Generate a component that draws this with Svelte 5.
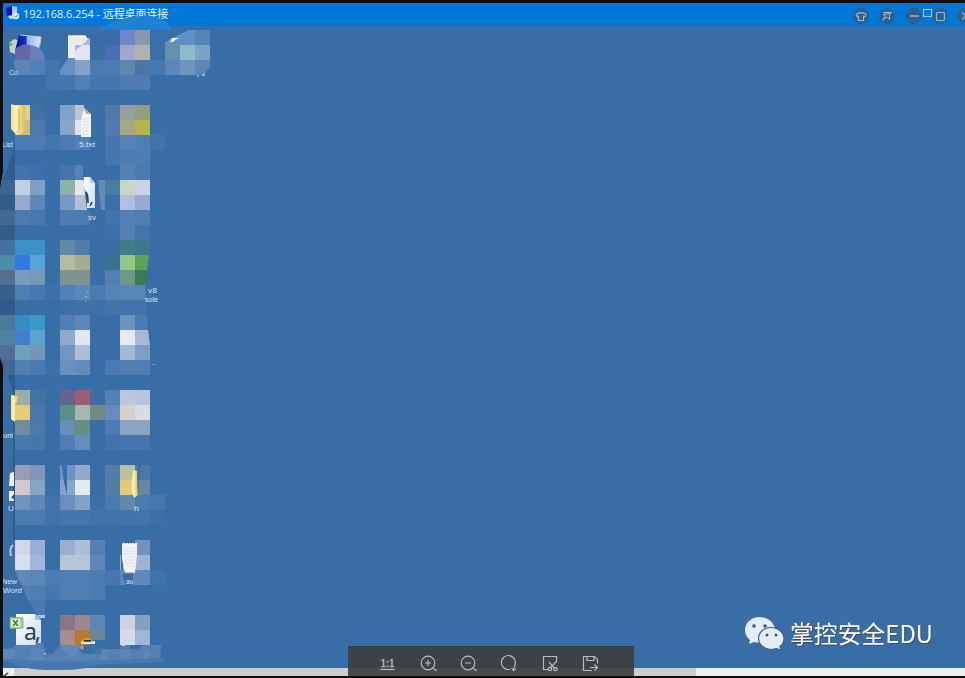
<script>
  const cell = 15;
  // Each row: top edge, then pairs of column index and fill
  const rows = [
    [30, '7:3a6cab 8:7186c8 9:8799b0 10:386ea9 12:6695cd 13:5584bb'],
    [45, '7:4670b3 8:a1a6cd 9:b3b0b0 10:386ea9 11:668fa8 12:8fbccb 13:7ba3c6'],
    [60, '3:4174ad 5:84a1c6 6:4b7ab1 7:4c7cb2 8:5f86ab 9:4a76a2 10:4678b0 11:5a87b8 12:6e95be'],
    [75, '3:4075ad 4:4477ae 5:5080b4 6:4577ae 7:4577ae 8:4f7db2 9:4f7db2'],
    [105, '2:4072a6 4:82a2c8 7:5079a8 8:999ea0 9:929f7c'],
    [120, '1:cfc070 2:4b79af 4:8ba5c9 7:527ab2 8:a5aa7e 9:b4b64a'],
    [135, '1:4b7cb3 2:4b7cb3 3:4276ae 4:4b7bb2 5:5280b5 7:4577ad 8:5682b6 9:4f7eb3 10:4174aa'],
    [150, '7:4576ae 8:4d7db1 9:4d7db1'],
    [165, '1:4472ab 2:3f70aa 4:4574ad 8:5681b5 9:4b7ab1'],
    [180, '0:3d6593 1:c0d1e5 2:7f9fc4 4:8eb3a4 7:487e9e 8:c6d7c4 9:cdd3e6'],
    [195, '0:325c8a 1:98abc8 2:6088b7 4:7898c5 7:3a6ea8 8:b0c1df 9:95abd2'],
    [210, '0:426990 1:4b7bae 2:4777ae 4:4d7db1 5:4b7bb0 7:4174aa 8:5381b5 9:4f7eb3'],
    [225, '0:325c8a 7:3d70a9 8:5480b4 9:4374ac'],
    [240, '0:43739b 1:3b90c8 2:3994c3 4:6089a8 5:4f7caa 7:3a6ca3 8:3e7c88 9:3c7890'],
    [255, '0:4e8aab 1:3179dd 2:54a5d5 4:b7bb9e 5:a7ab90 7:3a7192 8:92c886 9:5aa357'],
    [270, '0:556e92 1:7a9bbb 2:7898b7 4:7f9490 5:7f9490 7:537fb3 8:6b9989 9:3a7a5a'],
    [285, '0:355f8e 1:4d7fb5 2:4779b0 3:3d70a8 4:5480b5 5:5c87b8 6:4b7ab0 7:5782b3 8:5985b7 9:5985b7'],
    [300, '0:305a88 4:3e70a8 5:4072a9 6:3e70a8 7:4273aa 8:4273aa 9:4273aa'],
    [315, '0:497a9e 1:368bc7 2:389ac8 4:517eb4 5:6086b6 8:6d94bd 9:4a7aae'],
    [330, '0:4f829f 1:427fd0 2:5ba2cc 4:8eaacd 5:e3e7f0 8:e8eaf0 9:a7b9d5'],
    [345, '0:516e94 1:6fa0bd 2:7396b5 4:7396be 5:afbed8 8:a4b7d4 9:7f9ec6'],
    [360, '0:446791 1:527fb3 2:4b7ab0 3:3d70a8 4:6890bc 5:648bb9 7:4b7ab0 8:527fb3 9:517eb2'],
    [390, '1:9dada1 2:4372a5 4:62668f 5:985f70 6:3e6ba2 7:5580b3 8:bdc8dc 9:b3c5dc'],
    [405, '1:e4cd76 2:4977a9 4:579183 5:a6b6b0 6:718987 7:678cbb 8:d8ceca 9:d8dbe0'],
    [420, '1:718d9a 2:4b79aa 4:668fb7 5:62927f 7:4c7bb1 8:8aa5c2 9:8aa5c2'],
    [435, '1:4778af 2:4576ae 4:4f7fb2 5:658eba 7:4073aa 8:4577ad 9:4577ad'],
    [465, '1:979db9 2:8196ba 4:6d93bf 5:93a9cb 7:527da5 8:bcc09d 9:4c7aa6'],
    [480, '1:d5c7d0 2:87a3c2 4:86a4c7 5:e5e9f0 7:527da5 8:e4ca76 9:658aa0'],
    [495, '1:6f95bf 2:5d88b7 3:4073ab 4:688fbe 5:83a2c8 6:3e70a8 7:4b7ab0 8:6089ad 9:4b7bac 10:4677ad'],
    [510, '1:4b7cb0 2:4b7bb0 3:4073aa 4:4577ad 5:4577ad 6:4073aa 7:4073aa 8:4274ab 9:4375ab 10:3e70a8'],
    [540, '1:d0d8e9 2:99b0d4 4:97afd0 5:abc0d7 6:5781b4 9:7194be'],
    [555, '1:d7dff0 2:9fb7dc 4:b5c6d9 5:b5c6d9 6:6186b7 8:9eb2d0 9:a0b5d3'],
    [570, '2:5b86b8 3:4b7bb0 4:4f7eb3 5:4f7eb3 6:4b7bb0 7:4577ad 8:6088ba 9:6088ba 10:4073aa'],
    [585, '2:4f7eb3 3:4577ae 4:4f7eb3 5:4f7eb3 6:4b7bb0'],
    [615, '4:877782 5:9c8890 6:5c86b6 8:cdd5e4 9:82a1c2'],
    [630, '4:a98d8d 5:b57b34 8:d2daeb 9:a1b5d7']
  ];
  const mosaic = rows.flatMap(([y, spec]) =>
    spec.split(' ').map((pair) => {
      const [col, fill] = pair.split(':');
      return { x: Number(col) * cell, y, fill: '#' + fill };
    })
  );
  const labels = [
    [9, 75, 'Co', 9], [2, 147, 'List', 11], [79, 147, '5.txt', 16], [88, 220, 'sv', 8],
    [148, 293, 'v8', 9], [145, 302, 'sole', 13], [152, 365, '..', 4], [3, 438, 'uni', 10],
    [8, 511, 'U', 6], [134, 511, 'h', 5], [2, 584, 'New', 15], [3, 593, 'Word', 19], [126, 584, 'au', 7]
  ];
</script>

<main>
  <header>
    <svg class="app" width="14" height="14" viewBox="0 0 14 14">
      <path d="M0 2 6 0v9L1 10z" fill="#0713a8" /><path d="M6 0l5 1v8L6 9z" fill="#a9c6f5" />
      <path d="M2 10l6-1 3 3-7 1z" fill="#d5dbe4" /><circle cx="10" cy="10" r="3.2" fill="#dbe6d8" />
      <path d="M8.5 10l1.2 1.2 2-2.4" stroke="#4b9a4b" fill="none" />
    </svg>
    <h1>192.168.6.254 - 远程桌面连接</h1>
    <svg class="controls" width="120" height="26" viewBox="845 0 120 26" fill="none" stroke="#9db8cb" stroke-width="1.1">
      <g fill="#2a6191" stroke="none"><circle cx="861" cy="16" r="8.3" /><circle cx="887" cy="16" r="8.3" /><circle cx="914" cy="16" r="8.3" /><circle cx="940" cy="16" r="8.3" /><circle cx="966" cy="16" r="8.3" /></g>
      <path d="M859 12.5q2 1.6 4 0l3 2-1.3 2.3-1.2-.6v4.3h-5v-4.3l-1.2.6-1.3-2.3z" />
      <path d="M883 12.5h8.5l-2 2v5l-2.5-2.5-4.5 3.5 3-4.5-2.5-1.5 4-.5 4.5-1.5" stroke-width="1" />
      <path d="M910 16h9" stroke-width="1.4" />
      <rect x="936.5" y="12.5" width="8" height="8" rx="1" />
      <path d="M962 12.5l7 7m0-7l-7 7" />
      <rect x="923.5" y="9.5" width="8" height="7" stroke="#8dcaf8" fill="#0878d0" />
    </svg>
  </header>

  <section class="desktop"></section>
  <div class="scroll"><span></span></div>

  <svg class="canvas" width="965" height="678" viewBox="0 0 965 678">
    <defs>
      <linearGradient id="folder"><stop stop-color="#f3df8d" /><stop offset=".35" stop-color="#fff3b5" /><stop offset="1" stop-color="#d9bd5b" /></linearGradient>
      <linearGradient id="paper" x2="1" y2="1"><stop stop-color="#fff" /><stop offset="1" stop-color="#cfdcf1" /></linearGradient>
      <linearGradient id="screen"><stop stop-color="#010b90" /><stop offset=".42" stop-color="#1831d0" /><stop offset=".48" stop-color="#8eb6f4" /><stop offset="1" stop-color="#dce9ff" /></linearGradient>
    </defs>
    <path d="M0 188L3 170V360H0z" fill="#386da6" />
    <path d="M15 138L14 150 0 188V360H3L13 392V540H15z" fill="#315b88" />
    {#each mosaic as c}
      <rect x={c.x} y={c.y} width={cell} height={cell} fill={c.fill} shape-rendering="crispEdges" />
    {/each}

    <!-- Computer and text document -->
    <path d="M9 43l5-4 6 2v15l-10-4z" fill="#c9cec8" /><path d="M9 43h3v3H9z" fill="#61b64b" />
    <path d="M19 35l22 2-2 12-20 4-4-2z" fill="url(#screen)" /><path d="M20 35l21 2-1 8" stroke="#c3cbd8" fill="none" />
    <path d="M15 49q7-6 15-4v15H15z" fill="#6268aa" /><path d="M30 45q14 2 15 15H30z" fill="#6a7fb8" />
    <path d="M14 60h16v15H19q-5-5-5-15z" fill="#5c86b6" /><path d="M30 60h15v15H30z" fill="#5380b9" /><path d="M45 60h9l6 10v5H45z" fill="#4376ae" />
    <path d="M68 35h17l4 5v18H68z" fill="#edf1f5" /><path d="M70 40h15M70 43h15M70 46h14M70 49h12M70 52h10" stroke="#dde1e8" /><path d="M69 35.5h16" stroke="#a8b0b8" stroke-dasharray="1 1" />
    <path d="M75 52l15-15v8H75z" fill="#a6bad6" /><path d="M75 51l8-6h7v15H75z" fill="#e2e6f0" /><path d="M60 70l8-12h7v17H60z" fill="#6891c1" />
    <path d="M97 30q25-15 48-14 22 1 27 14v9l-5 3V30z" fill="#2180d0" /><path d="M105 30h15v15h-15z" fill="#3a6cab" /><path d="M120 30h15v15h-15z" fill="#7186c8" /><path d="M135 30h15v15h-15z" fill="#8799b0" /><path d="M150 30h22v9l-7 6h-15z" fill="#386ea9" />
    <path d="M172 38l17-8h6v15h-30v-3z" fill="#6090ca" /><path d="M165 30h24l-17 8-7 4z" fill="#386da6" /><path d="M170 42l2-4h7l-4 2-2 2z" fill="#f4f8fd" />
    <path d="M195 60h15v8l-7 7h-8z" fill="#5a86b8" />
    <path d="M197 76h2M202 75l2 1v-3" stroke="#c9dced" fill="none" />

    <!-- Folder and text document -->
    <path d="M11 104l3 1h11v27l-8 3-6-6z" fill="url(#folder)" /><path d="M19 109v21l-2 3" stroke="#d0ad52" fill="none" /><path d="M25 105h5v15h-5z" fill="#dcd090" />
    <path d="M75 105h9v3l-3 12h-6z" fill="#b8c4da" /><path d="M84 108l7 6v23H81v-18z" fill="#f4f5fa" /><path d="M84 108l7 6h-5z" fill="#a9afb8" />
    <path d="M82 119h7M82 122h7M82 125h7M82 128h7M82 131h7M82 134h7" stroke="#d7dce6" /><path d="M75 120h6v15h-6z" fill="#e2e3ef" />

    <!-- Comma-separated document -->
    <path d="M75 165h8v15h-8z" fill="#5682b8" /><path d="M75 180h9l1 15H75z" fill="#e5e7ec" /><path d="M75 195h10l2 15H75z" fill="#b0c0da" />
    <path d="M84 177h6l5 6v25h-8v-13l-3-8z" fill="url(#paper)" /><path d="M90 177l5 6h-5z" fill="#b8cfe4" /><path d="M86 192q2 2 2 11M92 202l-2 4" stroke="#253a62" stroke-width="1.6" fill="none" />
    <path d="M98 180h7v30h-4z" fill="#648cba" />
    <path d="M150 240v135-30l-2-15-1-15-1-15-1-15 2-15 2-15z" fill="#386da6" /><path d="M147 274h1v6h-2z" fill="#3a782e" />
    <path d="M86 296v2M85.5 301v1M87.5 291v1" stroke="#a9c0de" />

    <!-- Folders and shortcuts -->
    <path d="M11 395l7 1-1 6-2 2v18l-4-3z" fill="url(#folder)" />
    <path d="M10 473l4-1v14H9z" fill="#eef0f4" /><path d="M9 491h5v10H9z" fill="#edf0f7" /><path d="M11 498l3-4v5z" fill="#1d4d8b" />
    <path d="M62 465h5v30l-3-12z" fill="#386da6" />
    <path d="M138 465h3l-2 15-1 15v-9z" fill="#386da6" /><path d="M133 470l4 1v15l1 9-4 3-3-10z" fill="url(#folder)" />
    <path d="M13 545q-4 3-2 11" stroke="#b8c6e6" stroke-width="2" fill="none" />
    <path d="M121 555h2v15h-2z" fill="#386da6" /><path d="M122 543h15v12l-2 18h-10l-3-14z" fill="#f3f4f9" /><path d="M124 548h12M124 551h12M124 554h12M124 557h11M124 560h11M124 563h11M125 566h9" stroke="#d9dfea" /><path d="M122 543.5h15" stroke="#9ba7b8" stroke-dasharray="1 2" /><path d="M125 573h9" stroke="#7d8794" />
    <path d="M122 574h11v11h-7z" fill="#386da6" />

    <!-- Spreadsheet document and lower brush strokes -->
    <path d="M15 570h15v30h15v17h-5q-7-5-17-29-6-10-8-18z" fill="#4778ae" />
    <path d="M15 570h15v15h-8q-5-7-7-15z" fill="#6088b8" /><path d="M22 585h8v15h-2z" fill="#5480b4" />
    <path d="M16 614h19l6 6v25H16z" fill="url(#paper)" /><path d="M35 614l6 6h-6z" fill="#9fc0e3" /><path d="M37 615h8v3h-5z" fill="#b3c7d9" />
    <path d="M10 617l13 1v10l-13 1z" fill="#a4d491" stroke="#67a45c" stroke-width=".7" /><path d="M11 619h9v8h-9z" fill="#edf6e8" /><path d="M13 620l5 6m0-6l-5 6" stroke="#36933b" stroke-width="1.8" />
    <text class="letter" x="24" y="640" textLength="17">a,</text>
    <path d="M90 630h15v10H90z" fill="#6b8795" /><path d="M81 641h14v3H81z" fill="#eee3cd" /><path d="M82 640q5-4 10 0l1 2H82z" fill="#e99a1d" /><path d="M84 640h7v1.5h-7z" fill="#322616" />
    <path d="M3 649l10-1q1-3 5-3h17l1-2h7l2 6-1 5h9l7-9h20l-2 4 5 4h10v-4h45l5-4h18l-1 15-37 2-43 4q-20 5-38 2l-22-3q-8-4-17-4z" fill="#5480b4" />
    <path d="M3 649h12v10H3zM30 649h15v11H30zM100 650h9v10h-9zM120 645h10v15h-10zM144 650h6v10h-6z" fill="#6089b9" opacity=".65" />
    <path d="M60 645h20l-2 8-6 5q-7-3-12-13z" fill="#6089b9" /><path d="M79 648l3-4 2 3-1 3z" fill="#9b9c91" />
    <path d="M84 649h18v5H83z" fill="#386da6" opacity=".7" />
    <path d="M3 660q14-2 30 1h50l82-3-2 4-65 3q-15 5-36 5H44q-24-1-41-10z" fill="#4778b0" />
    <path d="M122 645h3" stroke="#d8d7d5" stroke-width="2" />
    <path d="M44 653.5h2" stroke="#d2e1ef" />

    {#each labels as [x, y, text, width]}
      <text {x} {y} textLength={width} lengthAdjust="spacingAndGlyphs">{text}</text>
    {/each}

    <!-- Window frame -->
    <path d="M0 0h965v3H3v167L0 188zM0 358l3 8v310h962v2H0z" fill="#0d0d0f" />
    <path d="M8 673l-4 3" stroke="#333" stroke-width="1.5" />

    <g class="brand">
      <path d="M760 617c-9 0-15 6-15 13q0 6 5 10l-1 4 5-2 6 1c8 0 15-6 15-13s-7-13-15-13z" fill="#e5ecf6" />
      <path d="M771 627.500c-7 0-12.500 5-12.500 11s6 11 12.500 11l6-1 4 2-1-4q4-3 4-8c0-6-6-11-13-11z" fill="#e5ecf6" stroke="#3a5d88" stroke-width="1.2" />
      <g fill="#345981"><circle cx="754" cy="626" r="1.8" /><circle cx="765" cy="626" r="1.8" /><circle cx="767" cy="635" r="1.5" /><circle cx="776" cy="635" r="1.5" /></g>
      <text x="790" y="643" textLength="143" lengthAdjust="spacingAndGlyphs">掌控安全EDU</text>
    </g>
  </svg>

  <nav>
    <svg width="286" height="30" viewBox="348 646 286 30" fill="none" stroke="#b8bbbe" stroke-width="1.2">
      <text x="380" y="667" textLength="15">1:1</text><path d="M380.500 669.500h14" />
      <circle cx="428" cy="663" r="6.800" /><path d="M433 668l3.500 3M425 663h6M428 660v6" />
      <circle cx="468" cy="663" r="6.800" /><path d="M473 668l3.500 3M465 663h6" />
      <path d="M510 669.500h-2a7 7 0 1 1 7.200-5.500q-.5 3-2 6M511.500 668l2 2.500 2.500-1.500" />
      <path d="M549 669.500h-5.500v-13h13v6M549 662l6 7M556 662l-6 6" /><circle cx="550" cy="669" r="1.700" /><circle cx="555.500" cy="669" r="1.700" />
      <path d="M592 670.500h-8.500v-14h11l3 3v4M587 656.500v4h7v-4M590 667.500h7M594.500 664.500l3 3-3 3" />
    </svg>
  </nav>
</main>

<style>
  :global(body) { overflow: hidden; }
  main { position: relative; display: flex; flex-direction: column; box-sizing: border-box; width: 965px; height: 678px; padding: 3px 0 2px 3px; background: #0d0d0f; overflow: hidden; }
  header { height: 23px; flex: none; display: flex; align-items: center; gap: 3px; padding-left: 3px; background: #0078d9; }
  .app { flex: none; margin-top: -3px; }
  h1 { margin: -2px 0 0; color: #e9f5ff; font: 11px/20px "Open Sans", "Noto Sans CJK SC", sans-serif; letter-spacing: -.07px; white-space: nowrap; }
  .controls { margin: -3px 0 0 auto; height: 26px; }
  .desktop { flex: 1; background: #386da6; }
  .scroll { height: 8px; display: flex; justify-content: flex-end; background: linear-gradient(90deg, #eee 11px, #cdcdcd 11px); }
  .scroll span { width: 269px; background: #efefef; }
  .canvas { position: absolute; inset: 0; pointer-events: none; }
  .canvas text { fill: #d7e5f5; font: 8px "Liberation Sans", sans-serif; }
  .canvas .letter { fill: #223d5c; font: 23px "Noto Sans", sans-serif; }
  .canvas .brand text { fill: #fff; font: 24px "Noto Sans CJK SC", sans-serif; filter: drop-shadow(1px 1px 0 #404b5a); }
  nav { position: absolute; left: 348px; top: 646px; width: 286px; height: 30px; background: linear-gradient(#363c43 1px, #3d4246 1px 22px, #494949 22px); }
  nav svg { display: block; }
  nav text { fill: #b8bbbe; stroke: #b8bbbe; stroke-width: .3; font: 13px "Liberation Serif", serif; }
</style>
